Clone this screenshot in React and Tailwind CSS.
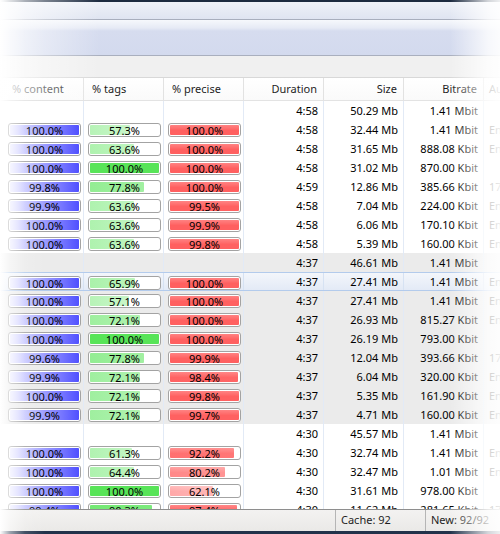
import React from "react";

const rows = [
  { head: true, dur: "4:58", size: "50.29 Mb", rate: "1.41 Mbit", ext: "" },
  { c: 100.0, t: 57.3, p: 100.0, dur: "4:58", size: "32.44 Mb", rate: "1.41 Mbit", ext: "Eng" },
  { c: 100.0, t: 63.6, p: 100.0, dur: "4:58", size: "31.65 Mb", rate: "888.08 Kbit", ext: "Eng" },
  { c: 100.0, t: 100.0, p: 100.0, dur: "4:58", size: "31.02 Mb", rate: "870.00 Kbit", ext: "" },
  { c: 99.8, t: 77.8, p: 100.0, dur: "4:59", size: "12.86 Mb", rate: "385.66 Kbit", ext: "17" },
  { c: 99.9, t: 63.6, p: 99.5, dur: "4:58", size: "7.04 Mb", rate: "224.00 Kbit", ext: "Eng" },
  { c: 100.0, t: 63.6, p: 99.9, dur: "4:58", size: "6.06 Mb", rate: "170.10 Kbit", ext: "Eng" },
  { c: 100.0, t: 63.6, p: 99.8, dur: "4:58", size: "5.39 Mb", rate: "160.00 Kbit", ext: "Eng" },
  { head: true, alt: true, dur: "4:37", size: "46.61 Mb", rate: "1.41 Mbit", ext: "" },
  { alt: true, sel: true, c: 100.0, t: 65.9, p: 100.0, dur: "4:37", size: "27.41 Mb", rate: "1.41 Mbit", ext: "Eng" },
  { alt: true, c: 100.0, t: 57.1, p: 100.0, dur: "4:37", size: "27.41 Mb", rate: "1.41 Mbit", ext: "Eng" },
  { alt: true, c: 100.0, t: 72.1, p: 100.0, dur: "4:37", size: "26.93 Mb", rate: "815.27 Kbit", ext: "Eng" },
  { alt: true, c: 100.0, t: 100.0, p: 100.0, dur: "4:37", size: "26.19 Mb", rate: "793.00 Kbit", ext: "" },
  { alt: true, c: 99.6, t: 77.8, p: 99.9, dur: "4:37", size: "12.04 Mb", rate: "393.66 Kbit", ext: "17" },
  { alt: true, c: 99.9, t: 72.1, p: 98.4, dur: "4:37", size: "6.04 Mb", rate: "320.00 Kbit", ext: "Eng" },
  { alt: true, c: 100.0, t: 72.1, p: 99.8, dur: "4:37", size: "5.35 Mb", rate: "161.90 Kbit", ext: "Eng" },
  { alt: true, c: 99.9, t: 72.1, p: 99.7, dur: "4:37", size: "4.71 Mb", rate: "160.00 Kbit", ext: "Eng" },
  { head: true, dur: "4:30", size: "45.57 Mb", rate: "1.41 Mbit", ext: "" },
  { c: 100.0, t: 61.3, p: 92.2, dur: "4:30", size: "32.74 Mb", rate: "1.41 Mbit", ext: "Eng" },
  { c: 100.0, t: 64.4, p: 80.2, dur: "4:30", size: "32.47 Mb", rate: "1.01 Mbit", ext: "Eng" },
  { c: 100.0, t: 100.0, p: 62.1, dur: "4:30", size: "31.61 Mb", rate: "978.00 Kbit", ext: "" },
  { c: 99.4, t: 90.3, p: 97.4, dur: "4:30", size: "11.62 Mb", rate: "281.65 Kbit", ext: "17" },
];

const BLUE = [80, 80, 255];
const GREEN = [88, 228, 88];
const RED = [255, 96, 96];

const mix = (c, k) => `rgb(${c.map((x) => Math.round(255 - (255 - x) * k)).join(",")})`;

const fillFor = (kind, v) => {
  const t = Math.min(1, Math.max(0, (v - 50) / 50));
  if (kind === "c") {
    return `linear-gradient(to right, ${mix(BLUE, 0.12)}, ${mix(BLUE, 1)})`;
  }
  if (kind === "t") {
    const k = 0.4 + 0.6 * Math.pow(t, 1.5);
    return `linear-gradient(to right, ${mix(GREEN, k)}, ${mix(GREEN, k * (0.7 + 0.3 * t))})`;
  }
  const k = 0.45 + 0.55 * Math.pow(t, 1.2);
  return `linear-gradient(to bottom, rgba(255,255,255,0.22), rgba(255,255,255,0) 55%), linear-gradient(to right, ${mix(RED, k)}, ${mix(RED, k * (0.75 + 0.25 * t))})`;
};

const Bar = ({ kind, value }) => (
  <div className="relative mt-[3px] h-[14px] w-[73px] shrink-0 rounded-[3px] border border-[#a3a3a3] bg-white p-px">
    <div
      className="h-full rounded-[1px]"
      style={{ width: `${value}%`, background: fillFor(kind, value) }}
    />
    <span className="absolute inset-0 flex items-center justify-center text-[11px] leading-none text-black">
      {value.toFixed(1)}%
    </span>
  </div>
);

const Row = ({ r }) => {
  let bg = "bg-white";
  if (r.alt) bg = "bg-[#ebebeb]";
  if (r.sel)
    bg = "bg-[linear-gradient(to_bottom,#f3f6fb,#e3eaf6)] border-y border-[#b3cbec]";
  const sep = r.sel ? "border-r border-[#d6e2f3]" : "border-r border-[#e2eaf6]";
  return (
    <div className={`flex h-[19px] shrink-0 ${bg}`}>
      <div className="w-[4px] shrink-0" />
      {["c", "t", "p"].map((k) => (
        <div key={k} className={`flex w-[80px] shrink-0 justify-start pl-[4px] ${sep}`}>
          {!r.head && <Bar kind={k} value={r[k]} />}
        </div>
      ))}
      {[r.dur, r.size, r.rate].map((txt, i) => (
        <div
          key={i}
          className={`flex w-[80px] shrink-0 items-center justify-end whitespace-nowrap pr-[5px] pt-[2px] ${sep}`}
        >
          {txt}
        </div>
      ))}
      <div className="flex min-w-0 flex-1 items-center overflow-hidden whitespace-nowrap pl-[5px] pt-[2px]">
        {r.ext}
      </div>
    </div>
  );
};

const App = () => {
  return (
    <div className="relative flex h-[534px] w-[500px] flex-col overflow-hidden bg-white font-['Noto_Sans',sans-serif] text-[11px] text-black">
      <div className="h-[2px] shrink-0 bg-[#1c2a40]" />
      <div className="h-[18px] shrink-0 border-b border-[#a8aebd] bg-[linear-gradient(to_bottom,#eef1f8,#dfe4f1)]" />
      <div className="h-[36px] shrink-0 border-b border-[#a9afbe] bg-[linear-gradient(to_bottom,#f6f8fc_0px,#e6eaf5_8px,#d6dcef_11px,#d3daee_100%)]" />
      <div className="h-[22px] shrink-0 border-b border-[#d8d8d8] bg-[#f0f0f0]" />

      <div className="flex h-[23px] shrink-0 border-b border-[#e3e3e3] bg-[linear-gradient(to_bottom,#ffffff,#fafafa)] text-[#1e1e1e]">
        <div className="w-[4px] shrink-0" />
        {["% content", "% tags", "% precise"].map((h) => (
          <div key={h} className="flex w-[80px] shrink-0 items-center whitespace-nowrap border-r border-[#e2e2e2] pl-[8px]">
            {h}
          </div>
        ))}
        {["Duration", "Size", "Bitrate"].map((h) => (
          <div key={h} className="flex w-[80px] shrink-0 items-center justify-end whitespace-nowrap border-r border-[#e2e2e2] pr-[6px]">
            {h}
          </div>
        ))}
        <div className="flex min-w-0 flex-1 items-center overflow-hidden whitespace-nowrap pl-[5px]">Audio</div>
      </div>

      <div className="flex h-[408px] shrink-0 flex-col overflow-hidden">
        {rows.map((r, i) => (
          <Row key={i} r={r} />
        ))}
      </div>

      <div className="flex h-[22px] shrink-0 border-t border-[#8e8e8e] bg-[linear-gradient(to_bottom,#f3f2f1,#eae9e7)] text-[#1e1e1e]">
        <div className="w-[335px] shrink-0" />
        <div className="flex w-[90px] shrink-0 items-center whitespace-nowrap border-l border-[#b5b5b5] pl-[5px]">
          Cache: 92
        </div>
        <div className="flex min-w-0 flex-1 items-center overflow-hidden whitespace-nowrap border-l border-[#b5b5b5] pl-[5px]">
          New: 92/92
        </div>
      </div>
      <div className="h-[3px] shrink-0 bg-[#22324a]" />

      {/* screenshot edge fades */}
      <div className="pointer-events-none absolute inset-y-0 left-0 w-[45px] bg-[linear-gradient(to_right,#ffffff_0px,rgba(255,255,255,0.55)_10px,rgba(255,255,255,0.15)_25px,rgba(255,255,255,0)_45px)]" />
      <div className="pointer-events-none absolute left-0 top-0 h-[100px] w-[100px] bg-[linear-gradient(to_right,rgba(255,255,255,0.75),rgba(255,255,255,0))]" />
      <div className="pointer-events-none absolute inset-y-0 right-0 w-[50px] bg-[linear-gradient(to_left,rgba(255,255,255,0.92)_0px,rgba(255,255,255,0.8)_12px,rgba(255,255,255,0)_50px)]" />
    </div>
  );
};

export default App;
